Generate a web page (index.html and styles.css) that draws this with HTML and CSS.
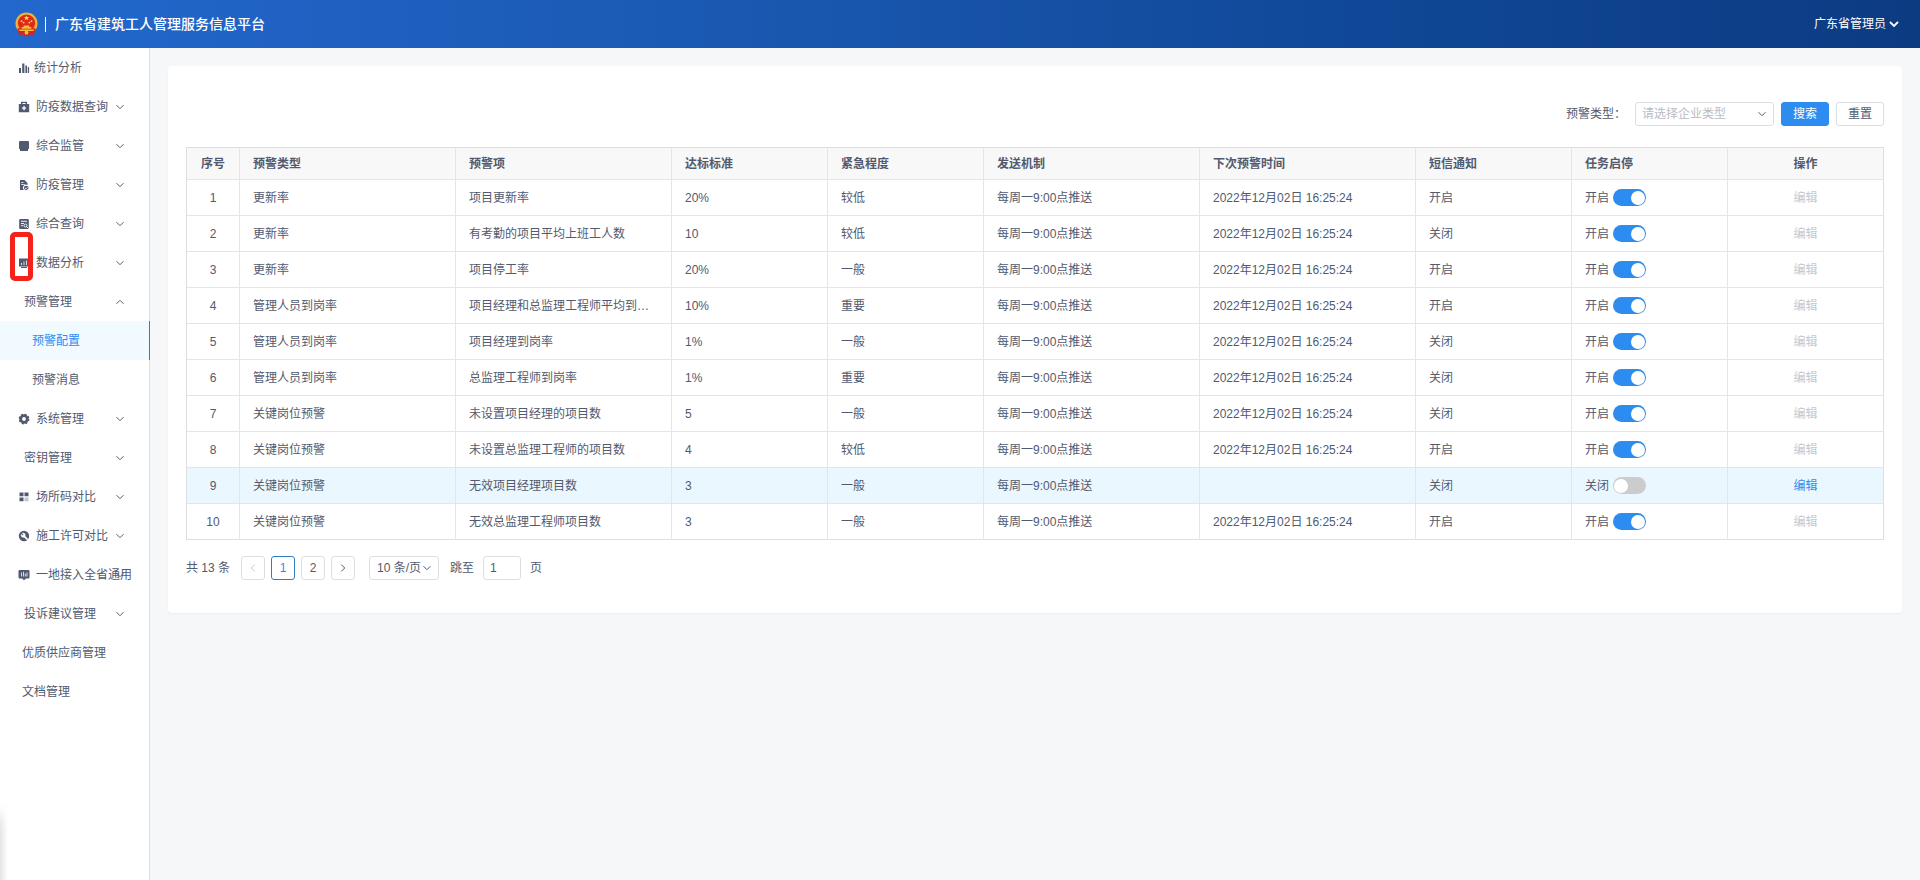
FILE: index.html
```html
<!DOCTYPE html>
<html lang="zh-CN">
<head>
<meta charset="utf-8">
<title>广东省建筑工人管理服务信息平台</title>
<link rel="stylesheet" href="styles.css">
</head>
<body>
<svg class="sprite" aria-hidden="true">
  <symbol id="chevron" viewBox="0 0 10 10"><path d="M1.500 3.200 5 6.700l3.500-3.500" fill="none" stroke="currentColor" stroke-width="1"/></symbol>
</svg>
<header class="topbar">
  <svg class="emblem" viewBox="0 0 24 26" aria-hidden="true">
    <circle cx="12" cy="12" r="11.500" fill="#e9b53c"/>
    <path d="M2.500 17h19l-2 7.500-3.500-1-4 2-4-2-3.500 1z" fill="#d8231c"/>
    <circle cx="12" cy="11.500" r="9" fill="#dd2a1b"/>
    <path d="m12 3.500.8 1.700 1.900.2-1.400 1.300.4 1.900-1.700-1-1.700 1 .4-1.900-1.400-1.300 1.900-.2z" fill="#f7cf4a"/>
    <circle cx="6.800" cy="9.500" r="1" fill="#f7cf4a"/><circle cx="9" cy="11" r="1" fill="#f7cf4a"/><circle cx="15" cy="11" r="1" fill="#f7cf4a"/><circle cx="17.200" cy="9.500" r="1" fill="#f7cf4a"/>
    <path d="M7 15.500h2v-1.500h6v1.500h2v2H7zM4.500 18.300h15v1.400h-15z" fill="#f2bd3c"/>
    <circle cx="12" cy="21.500" r="2" fill="#f2bd3c"/>
  </svg>
  <span class="divider"></span>
  <h1 class="title">广东省建筑工人管理服务信息平台</h1>
  <button class="user" type="button">广东省管理员<svg viewBox="0 0 12 12" aria-hidden="true"><path d="m2 4 4 4 4-4" fill="none" stroke="currentColor" stroke-width="1.800"/></svg></button>
</header>
<div class="layout">
  <nav class="sidebar" aria-label="主菜单">
    <ul class="menu">
      <li><a class="item first" href="#"><svg class="icon" viewBox="0 0 12 12"><path d="M1 6h2v5H1zM4.200 1.500h2.200V11H4.200zM7.400 3.500h1.600V11H7.400zM9.800 5h1.300v6H9.800z"/></svg>统计分析</a></li>
      <li><a class="item" href="#"><svg class="icon" viewBox="0 0 12 12"><path fill-rule="evenodd" d="M3 3V.8h6V3h2.200v8.200H.8V3zM4.500 3h3V2.100h-3zM5.400 5v1.500H4v1.300h1.400v1.500h1.300V7.800H8V6.500H6.700V5z"/></svg>防疫数据查询<svg class="arrow"><use href="#chevron"/></svg></a></li>
      <li><a class="item" href="#"><svg class="icon" viewBox="0 0 12 12"><path d="M2 1h8q1 0 1 1v6.200q0 1-1 1H2q-1 0-1-1V2q0-1 1-1zM2 9.200h8V11H2z"/></svg>综合监管<svg class="arrow"><use href="#chevron"/></svg></a></li>
      <li><a class="item" href="#"><svg class="icon" viewBox="0 0 12 12"><path fill-rule="evenodd" d="M2 1h4.500L9.500 4v2a3 3 0 0 0-3.300 5H2zM3.200 3v.8h2.300V3zM3.200 5.200V6H7v-.8z"/><path d="m8.100 6.800 2.300.8v1.700q-.7 1.300-2.300 1.900-1.600-.6-2-1.900V7.600z"/><path d="m7 9 1 .9 1.600-1.700" fill="none" stroke="#fff" stroke-width=".8"/></svg>防疫管理<svg class="arrow"><use href="#chevron"/></svg></a></li>
      <li><a class="item" href="#"><svg class="icon" viewBox="0 0 12 12"><rect x="1.200" y="1" width="9.600" height="10" rx="1"/><path d="M3 3.300h6M3 5.500h3M3 7.700h2" stroke="#fff" stroke-width=".9"/><circle cx="7.500" cy="7.500" r="1.500" fill="none" stroke="#fff" stroke-width=".9"/><path d="m8.600 8.600 1.900 1.900" stroke="#fff"/></svg>综合查询<svg class="arrow"><use href="#chevron"/></svg></a></li>
      <li class="marked"><a class="item" href="#"><svg class="icon" viewBox="0 0 12 12"><path d="M1 1.500h10v8H1zM3 10h6v1H3z"/><path d="M3.500 8V6M6 8V4.500M8.500 8V3.500" stroke="#fff" stroke-width=".8"/></svg>数据分析<svg class="arrow"><use href="#chevron"/></svg></a></li>
      <li><a class="item plain" href="#">预警管理<svg class="arrow up"><use href="#chevron"/></svg></a>
        <ul class="menu">
          <li><a class="item sub active" href="#" aria-current="page">预警配置</a></li>
          <li><a class="item sub" href="#">预警消息</a></li>
        </ul>
      </li>
      <li><a class="item" href="#"><svg class="icon" viewBox="0 0 12 12"><circle cx="6" cy="6" r="3.300" fill="none" stroke="currentColor" stroke-width="2.800"/><circle cx="6" cy="6" r="4.700" fill="none" stroke="currentColor" stroke-width="1.400" stroke-dasharray="2.100 1.590"/></svg>系统管理<svg class="arrow"><use href="#chevron"/></svg></a></li>
      <li><a class="item plain" href="#">密钥管理<svg class="arrow"><use href="#chevron"/></svg></a></li>
      <li><a class="item" href="#"><svg class="icon" viewBox="0 0 12 12"><path d="M1.500 1.500h4v3.800h-4zM6.500 1.500h4v3.800h-4zM1.500 6.500h4v3.800h-4z"/><path d="M6.500 6.500h4v3.800h-4z" opacity=".35"/></svg>场所码对比<svg class="arrow"><use href="#chevron"/></svg></a></li>
      <li><a class="item" href="#"><svg class="icon" viewBox="0 0 12 12"><circle cx="6" cy="6" r="5.200"/><path d="M6.300 6.300 9.600 9.600" stroke="#fff" stroke-width="1.700"/><path d="M4 3.200 5.600 4.800 4.800 5.600 3.200 4a2.300 2.300 0 0 0 3.400 3l.5-.6A2.300 2.300 0 0 0 4 3.200z" fill="#fff"/></svg>施工许可对比<svg class="arrow"><use href="#chevron"/></svg></a></li>
      <li><a class="item" href="#"><svg class="icon" viewBox="0 0 12 12"><path d="M1.500 1h9q1 0 1 1v6.500q0 1-1 1H8L6 11.200 4 9.500H1.500q-1 0-1-1V2q0-1 1-1z"/><path d="M3.500 3.500v4M5.500 2.800v4.700M7.300 4.500v3M9 3.500v4" stroke="#fff" stroke-width=".8"/></svg>一地接入全省通用<svg class="arrow"><use href="#chevron"/></svg></a></li>
      <li><a class="item plain" href="#">投诉建议管理<svg class="arrow"><use href="#chevron"/></svg></a></li>
      <li><a class="item leaf" href="#">优质供应商管理</a></li>
      <li><a class="item leaf" href="#">文档管理</a></li>
    </ul>
    <span class="edge-shadow"></span>
  </nav>
  <main class="content">
    <section class="panel">
      <form class="filters">
        <label for="type">预警类型：</label>
        <span class="select-box">
          <select id="type"><option>请选择企业类型</option></select>
          <svg class="caret"><use href="#chevron"/></svg>
        </span>
        <button class="btn primary" type="button">搜索</button>
        <button class="btn" type="reset">重置</button>
      </form>
      <table class="grid">
        <colgroup><col class="c-no"><col class="c-wide"><col class="c-wide"><col class="c-mid"><col class="c-mid"><col class="c-wide"><col class="c-wide"><col class="c-mid"><col class="c-mid"><col class="c-mid"></colgroup>
        <thead><tr><th class="center">序号</th><th>预警类型</th><th>预警项</th><th>达标标准</th><th>紧急程度</th><th>发送机制</th><th>下次预警时间</th><th>短信通知</th><th>任务启停</th><th class="center">操作</th></tr></thead>
        <tbody>
          <tr><td class="center">1</td><td>更新率</td><td>项目更新率</td><td>20%</td><td>较低</td><td>每周一9:00点推送</td><td>2022年12月02日 16:25:24</td><td>开启</td><td><label class="toggle">开启<input type="checkbox" role="switch" checked></label></td><td class="center"><button class="edit" type="button" disabled>编辑</button></td></tr>
          <tr><td class="center">2</td><td>更新率</td><td>有考勤的项目平均上班工人数</td><td>10</td><td>较低</td><td>每周一9:00点推送</td><td>2022年12月02日 16:25:24</td><td>关闭</td><td><label class="toggle">开启<input type="checkbox" role="switch" checked></label></td><td class="center"><button class="edit" type="button" disabled>编辑</button></td></tr>
          <tr><td class="center">3</td><td>更新率</td><td>项目停工率</td><td>20%</td><td>一般</td><td>每周一9:00点推送</td><td>2022年12月02日 16:25:24</td><td>开启</td><td><label class="toggle">开启<input type="checkbox" role="switch" checked></label></td><td class="center"><button class="edit" type="button" disabled>编辑</button></td></tr>
          <tr><td class="center">4</td><td>管理人员到岗率</td><td>项目经理和总监理工程师平均到岗率</td><td>10%</td><td>重要</td><td>每周一9:00点推送</td><td>2022年12月02日 16:25:24</td><td>开启</td><td><label class="toggle">开启<input type="checkbox" role="switch" checked></label></td><td class="center"><button class="edit" type="button" disabled>编辑</button></td></tr>
          <tr><td class="center">5</td><td>管理人员到岗率</td><td>项目经理到岗率</td><td>1%</td><td>一般</td><td>每周一9:00点推送</td><td>2022年12月02日 16:25:24</td><td>关闭</td><td><label class="toggle">开启<input type="checkbox" role="switch" checked></label></td><td class="center"><button class="edit" type="button" disabled>编辑</button></td></tr>
          <tr><td class="center">6</td><td>管理人员到岗率</td><td>总监理工程师到岗率</td><td>1%</td><td>重要</td><td>每周一9:00点推送</td><td>2022年12月02日 16:25:24</td><td>关闭</td><td><label class="toggle">开启<input type="checkbox" role="switch" checked></label></td><td class="center"><button class="edit" type="button" disabled>编辑</button></td></tr>
          <tr><td class="center">7</td><td>关键岗位预警</td><td>未设置项目经理的项目数</td><td>5</td><td>一般</td><td>每周一9:00点推送</td><td>2022年12月02日 16:25:24</td><td>关闭</td><td><label class="toggle">开启<input type="checkbox" role="switch" checked></label></td><td class="center"><button class="edit" type="button" disabled>编辑</button></td></tr>
          <tr><td class="center">8</td><td>关键岗位预警</td><td>未设置总监理工程师的项目数</td><td>4</td><td>较低</td><td>每周一9:00点推送</td><td>2022年12月02日 16:25:24</td><td>开启</td><td><label class="toggle">开启<input type="checkbox" role="switch" checked></label></td><td class="center"><button class="edit" type="button" disabled>编辑</button></td></tr>
          <tr class="hovered"><td class="center">9</td><td>关键岗位预警</td><td>无效项目经理项目数</td><td>3</td><td>一般</td><td>每周一9:00点推送</td><td></td><td>关闭</td><td><label class="toggle">关闭<input type="checkbox" role="switch"></label></td><td class="center"><button class="edit" type="button">编辑</button></td></tr>
          <tr><td class="center">10</td><td>关键岗位预警</td><td>无效总监理工程师项目数</td><td>3</td><td>一般</td><td>每周一9:00点推送</td><td>2022年12月02日 16:25:24</td><td>开启</td><td><label class="toggle">开启<input type="checkbox" role="switch" checked></label></td><td class="center"><button class="edit" type="button" disabled>编辑</button></td></tr>
        </tbody>
      </table>
      <div class="pager">
        <span class="total">共 13 条</span>
        <div class="pages">
          <button class="page" type="button" disabled aria-label="上一页"><svg class="prev"><use href="#chevron"/></svg></button>
          <button class="page current" type="button">1</button>
          <button class="page" type="button">2</button>
          <button class="page" type="button" aria-label="下一页"><svg class="next"><use href="#chevron"/></svg></button>
        </div>
        <span class="select-box size">
          <select aria-label="每页条数"><option>10 条/页</option></select>
          <svg class="caret"><use href="#chevron"/></svg>
        </span>
        <label class="jump">跳至<input type="text" value="1">页</label>
      </div>
    </section>
  </main>
</div>
</body>
</html>
```
FILE: styles.css
```css
*, *::before, *::after { box-sizing: border-box; }

body {
  margin: 0;
  min-height: 100vh;
  display: flex;
  flex-direction: column;
  background: #f5f7f9;
  color: #515a6e;
  font: 12px/18px "Liberation Sans", "Noto Sans CJK SC", sans-serif;
}

button, input, select { font: inherit; color: inherit; }
button { cursor: pointer; }
a { color: inherit; text-decoration: none; }
svg { flex: none; }
.sprite { display: none; }

/* Top bar */
.topbar {
  display: flex;
  align-items: center;
  height: 48px;
  padding: 0 20px 0 15px;
  color: #fff;
  background: linear-gradient(90deg, #2268cd 0%, #1b5ab4 35%, #0f4694 75%, #0c3b82 100%);
}
.emblem { width: 23px; height: 25px; }
.divider { width: 1px; height: 15px; margin: 0 9px 0 7px; background: #fff; }
.title { margin: 0; font-size: 14px; line-height: 20px; font-weight: 500; }
.user {
  display: flex;
  align-items: center;
  gap: 2px;
  margin-left: auto;
  padding: 0;
  border: 0;
  background: none;
}
.user svg { width: 12px; height: 12px; }

.layout { display: flex; flex: 1; }

/* Side menu */
.sidebar {
  position: relative;
  flex: none;
  width: 150px;
  background: #fff;
  border-right: 1px solid #dcdee2;
}
.menu { margin: 0; padding: 0; list-style: none; }
.item {
  position: relative;
  display: flex;
  align-items: center;
  gap: 6px;
  height: 39px;
  padding-left: 18px;
  white-space: nowrap;
}
.item.first { gap: 4px; }
.item.plain { padding-left: 24px; }
.item.leaf { padding-left: 22px; }
.item.sub { padding-left: 32px; }
.item.active {
  margin-right: -1px;
  color: #2d8cf0;
  background: #f0faff;
  border-right: 1px solid #2d7fc4;
}
.icon { width: 12px; height: 12px; fill: currentColor; }
.arrow { position: absolute; right: 24px; width: 10px; height: 10px; }
.arrow.up { transform: rotate(180deg); }
.marked { position: relative; }
.marked::after {
  content: "";
  position: absolute;
  top: -11px;
  left: 10px;
  width: 23px;
  height: 49px;
  border: 5px solid #f5221b;
  border-radius: 5px;
}
.edge-shadow {
  position: absolute;
  left: 0;
  bottom: 0;
  width: 8px;
  height: 76px;
  background: linear-gradient(90deg, rgba(0, 0, 0, .1), rgba(0, 0, 0, 0));
  -webkit-mask-image: linear-gradient(transparent, #000 24px);
  mask-image: linear-gradient(transparent, #000 24px);
}

/* Content */
.content { flex: 1; min-width: 0; padding: 18px; }
.panel {
  padding: 36px 18px 33px;
  background: #fff;
  border-radius: 4px;
  box-shadow: 0 1px 2px rgba(0, 0, 0, .05);
}
.filters {
  display: flex;
  align-items: center;
  justify-content: flex-end;
  gap: 7px;
  margin-bottom: 21px;
}
.filters label { margin-right: 2px; }
.select-box { position: relative; display: block; width: 139px; }
.select-box select {
  display: block;
  appearance: none;
  width: 100%;
  height: 24px;
  padding: 0 20px 0 6px;
  border: 1px solid #dcdee2;
  border-radius: 3px;
  background: #fff;
}
.filters select { color: #b8bcc6; }
.caret {
  position: absolute;
  top: 7px;
  right: 7px;
  width: 10px;
  height: 10px;
  pointer-events: none;
}
.btn {
  width: 48px;
  height: 24px;
  padding: 0;
  border: 1px solid #dcdee2;
  border-radius: 3px;
  background: #fff;
}
.btn.primary { color: #fff; background: #2d8cf0; border-color: #2d8cf0; }

/* Table */
.grid {
  width: 100%;
  table-layout: fixed;
  border-collapse: separate;
  border-spacing: 0;
  border: solid #dcdee2;
  border-width: 1px 0 0 1px;
}
.c-no { width: 53px; }
.c-wide { width: 216px; }
.c-mid { width: 156px; }
.grid th, .grid td {
  height: 36px;
  padding: 0 13px;
  border: solid #e3e5e9;
  border-width: 0 1px 1px 0;
  text-align: left;
  white-space: nowrap;
  overflow: hidden;
  text-overflow: ellipsis;
}
.grid th { height: 32px; background: #f8f8f9; font-weight: 700; }
.grid .center { padding: 0; text-align: center; }
.grid tr > :last-child { border-right-color: #dcdee2; }
.grid tbody tr:last-child td { border-bottom-color: #dcdee2; }
.grid .hovered td { background: #ebf7ff; }
.toggle { display: flex; align-items: center; gap: 4px; }
.toggle input {
  appearance: none;
  display: flex;
  align-items: center;
  width: 33px;
  height: 17px;
  margin: 0;
  padding: 0 1px;
  border-radius: 9px;
  background: #ccc;
}
.toggle input::before {
  content: "";
  width: 14px;
  height: 14px;
  border-radius: 50%;
  background: #fff;
}
.toggle input:checked { justify-content: flex-end; background: #2d8cf0; }
.edit { padding: 0; border: 0; background: none; color: #2d8cf0; }
.edit:disabled { color: #c5c8ce; cursor: default; }

/* Pagination */
.pager { display: flex; align-items: center; margin-top: 16px; }
.pages { display: flex; gap: 6px; margin: 0 14px 0 11px; }
.page {
  display: flex;
  align-items: center;
  justify-content: center;
  width: 24px;
  height: 24px;
  padding: 0;
  border: 1px solid #dcdee2;
  border-radius: 3px;
  background: #fff;
}
.page.current { color: #2d8cf0; border-color: #2d7fc4; }
.page:disabled { color: #c5c8ce; }
.page svg { width: 10px; height: 10px; }
.prev { transform: rotate(90deg); }
.next { transform: rotate(-90deg); }
.size { width: 70px; }
.size select { padding: 0 0 0 7px; }
.jump { display: flex; align-items: center; gap: 9px; margin-left: 11px; }
.jump input {
  width: 38px;
  height: 24px;
  padding: 0 6px;
  border: 1px solid #dcdee2;
  border-radius: 3px;
}
```
